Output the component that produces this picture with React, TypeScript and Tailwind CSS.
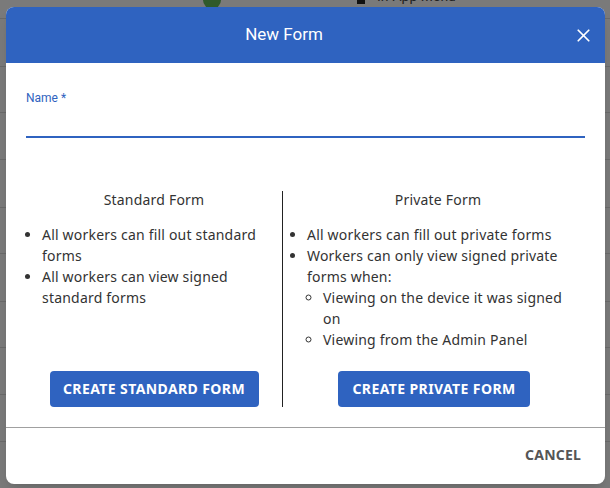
import { X } from 'lucide-react';

const bgRows = [19, 67, 113, 160, 208, 254, 302, 348, 395, 442];

export default function App() {
  return (
    <div className="relative w-[610px] h-[488px] overflow-hidden bg-[#7a7a7a] font-['Noto_Sans',sans-serif]">
      {/* Dimmed page behind the dialog */}
      <div className="flex flex-col">
        {bgRows.map((y, i) => (
          <div
            key={y}
            className="border-b border-[#6a6a6a]"
            style={{ height: i === 0 ? y : y - bgRows[i - 1] }}
          />
        ))}
      </div>
      <div className="absolute left-[203px] top-[-9px] w-[18px] h-[18px] rounded-full bg-[#2f5a2a]" />
      <div className="absolute left-[357px] top-[-14px] flex items-center gap-[12px] text-[14px] text-[#222] font-['Roboto',sans-serif]">
        <span className="w-[8px] h-[6px] bg-[#111] mt-[8px]" />
        <span>In-App Menu</span>
      </div>

      {/* Dialog */}
      <div className="absolute left-[6px] top-[7px] w-[599px] h-[477px] rounded-lg bg-white overflow-hidden flex flex-col shadow-lg">
        {/* Header */}
        <div className="h-[56px] bg-[#2f63c0] flex items-center shrink-0">
          <h1 className="flex-1 text-center text-white text-[17px] font-['Roboto',sans-serif]">New Form</h1>
          <button className="w-[43px] h-[56px] flex items-center justify-center text-white">
            <X size={21} strokeWidth={2} />
          </button>
        </div>

        {/* Body */}
        <div className="flex-1 flex flex-col px-[20px] pt-[27px] pb-[20px]">
          <label className="block text-[12px] leading-4 text-[#2f63c0] font-['Roboto',sans-serif]">Name *</label>
          <div className="h-[32px] border-b-2 border-[#2f63c0]" />

          <div className="mt-[53px] flex flex-1 text-[14px] leading-[21px] tracking-[0.2px] text-[#333]">
            {/* Standard */}
            <div className="w-[257px] flex flex-col border-r border-[#222]">
              <h2 className="text-center leading-[18px]">Standard Form</h2>
              <ul className="mt-[15px] list-disc pl-4 pr-2">
                <li>All workers can fill out standard forms</li>
                <li>All workers can view signed standard forms</li>
              </ul>
              <div className="mt-auto flex justify-center">
                <button className="h-[36px] w-[209px] pb-[2px] rounded bg-[#2f63c0] text-white text-[14px] font-bold tracking-[0.4px] uppercase">
                  Create Standard Form
                </button>
              </div>
            </div>

            {/* Private */}
            <div className="flex-1 flex flex-col">
              <h2 className="text-center leading-[18px] pl-2">Private Form</h2>
              <ul className="mt-[15px] list-disc pl-6 pr-2">
                <li>All workers can fill out private forms</li>
                <li>
                  Workers can only view signed private forms when:
                  <ul className="list-[circle] pl-4">
                    <li>Viewing on the device it was signed on</li>
                    <li>Viewing from the Admin Panel</li>
                  </ul>
                </li>
              </ul>
              <div className="mt-auto flex justify-center">
                <button className="h-[36px] w-[192px] pb-[2px] rounded bg-[#2f63c0] text-white text-[14px] font-bold tracking-[0.4px] uppercase">
                  Create Private Form
                </button>
              </div>
            </div>
          </div>
        </div>

        {/* Footer */}
        <div className="h-[57px] shrink-0 border-t border-[#a0a0a0] flex items-center justify-end pr-[24px] pb-[3px]">
          <button className="text-[14px] font-bold text-[#555] uppercase tracking-[0.2px]">Cancel</button>
        </div>
      </div>
    </div>
  );
}
